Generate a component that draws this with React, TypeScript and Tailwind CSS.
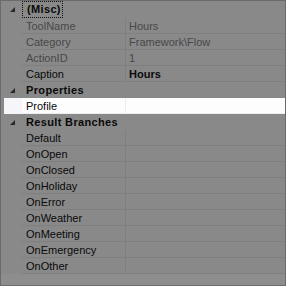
import React from "react";

const Tri = () => (
  <svg width="5" height="5" viewBox="0 0 5 5" className="block">
    <polygon points="5,0 5,5 0,5" fill="#2a2a2a" />
  </svg>
);

function Header({ label, focus, tall }: { label: string; focus?: boolean; tall?: boolean }) {
  return (
    <div className={`flex items-center ${tall ? "h-[17px]" : "h-[16px]"}`}>
      <div className="w-[21px] h-full flex items-center pl-[9px]">
        <Tri />
      </div>
      <div
        className={`h-full flex items-center font-bold text-[#0a0a0a] tracking-[0.35px] ${
          focus ? "border border-dotted border-[#111] pl-[4px] pr-[1px]" : "pl-[4px]"
        }`}
      >
        {label}
      </div>
    </div>
  );
}

function Row({
  name,
  value,
  dim,
  bold,
  white,
}: {
  name: string;
  value?: string;
  dim?: boolean;
  bold?: boolean;
  white?: boolean;
}) {
  return (
    <div className={`flex h-[16px] ${white ? "pl-[3px]" : ""}`}>
      <div className={`${white ? "w-[18px] bg-[#f6f6fa]" : "w-[21px]"} h-full`} />
      <div
        className={`flex flex-1 h-full ${
          white ? "bg-[#fdfdfd] border-b border-[#eeeeee]" : "border-b border-[#7f7f7f]"
        }`}
      >
        <div
          className={`w-[104px] h-full flex items-center pl-[4px] pt-[1px] border-r ${
            white ? "border-[#ececec]" : "border-[#7f7f7f]"
          } ${dim ? "text-[#484848]" : "text-[#0a0a0a]"}`}
        >
          {name}
        </div>
        <div
          className={`flex-1 h-full flex items-center pl-[3px] pt-[1px] ${
            dim ? "text-[#484848]" : "text-[#0a0a0a]"
          } ${bold ? "font-bold" : ""}`}
        >
          {value}
        </div>
      </div>
    </div>
  );
}

export default function App() {
  const branches = [
    "Default",
    "OnOpen",
    "OnClosed",
    "OnHoliday",
    "OnError",
    "OnWeather",
    "OnMeeting",
    "OnEmergency",
    "OnOther",
  ];
  return (
    <div
      className="w-[286px] h-[286px] bg-[#8b8b8b] border border-[#6b6b6b] flex flex-col text-[11px] leading-none overflow-hidden"
      style={{ fontFamily: "'Liberation Sans', Arial, sans-serif" }}
    >
      <div className="flex flex-col bg-[#898989]">
        <Header label="(Misc)" focus tall />
        <Row name="ToolName" value="Hours" dim />
        <Row name="Category" value="Framework\Flow" dim />
        <Row name="ActionID" value="1" dim />
        <Row name="Caption" value="Hours" bold />
        <Header label="Properties" />
        <Row name="Profile" white />
        <Header label="Result Branches" />
        {branches.map((b) => (
          <Row key={b} name={b} />
        ))}
      </div>
      <div className="flex-1 bg-[#8d8d8d]" />
    </div>
  );
}
